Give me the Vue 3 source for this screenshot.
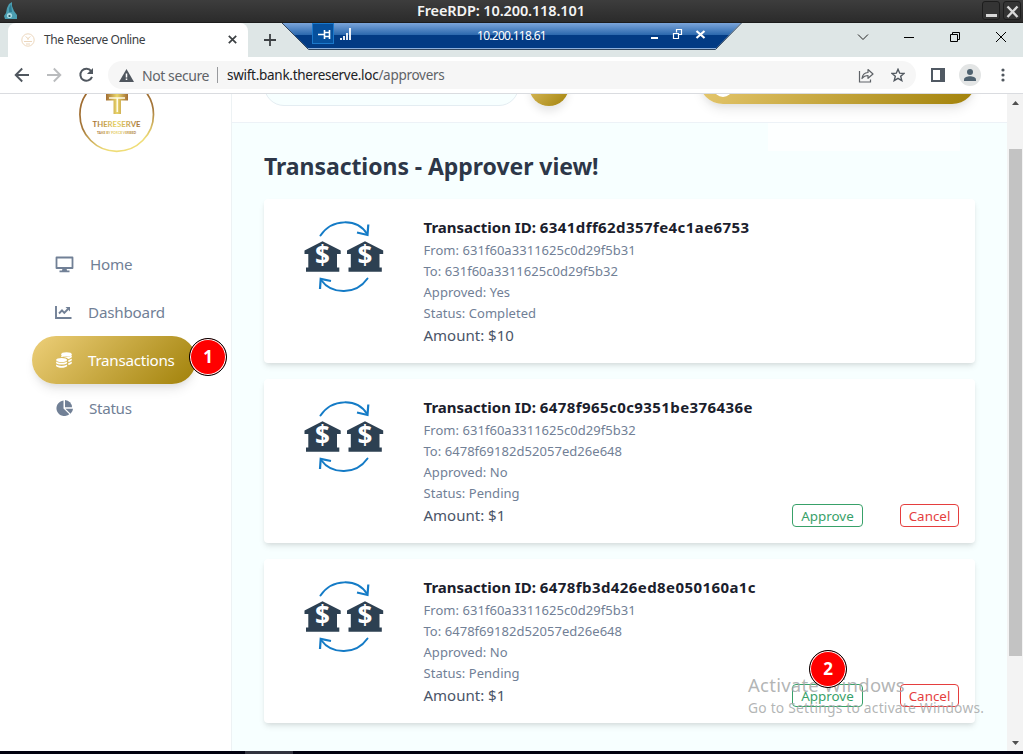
<script setup>
const transactions = [
  {
    id: '6341dff62d357fe4c1ae6753',
    from: '631f60a3311625c0d29f5b31',
    to: '631f60a3311625c0d29f5b32',
    approved: 'Yes',
    status: 'Completed',
    amount: '$10',
    pending: false,
  },
  {
    id: '6478f965c0c9351be376436e',
    from: '631f60a3311625c0d29f5b32',
    to: '6478f69182d52057ed26e648',
    approved: 'No',
    status: 'Pending',
    amount: '$1',
    pending: true,
  },
  {
    id: '6478fb3d426ed8e050160a1c',
    from: '631f60a3311625c0d29f5b31',
    to: '6478f69182d52057ed26e648',
    approved: 'No',
    status: 'Pending',
    amount: '$1',
    pending: true,
  },
]
</script>

<template>
  <div class="screen">
    <header class="titlebar">
      <svg class="app-icon" width="14" height="18" viewBox="0 0 14 18">
        <path d="M8 0 5 2 3 6 2 11 0 14 1 17H13V13L10 9 8 4Z" fill="#4b9db0" />
        <path d="M7 2 5 6 5 10 8 10Z" fill="#2c7b92" />
        <circle cx="5.500" cy="13.500" r="2.600" fill="#a9dbe3" />
        <circle cx="5.500" cy="14" r="1.100" fill="#214b58" />
      </svg>
      <span class="title">FreeRDP: 10.200.118.101</span>
      <div class="frame-buttons">
        <span class="frame-button"><svg width="17" height="18" viewBox="0 0 17 18"><rect x="3" y="12" width="11" height="3" fill="#d8d8d8" /></svg></span>
        <span class="frame-button"><svg width="17" height="18" viewBox="0 0 17 18"><path d="M3.500 4.500 13.500 15M13.500 4.500 3.500 15" stroke="#d8d8d8" stroke-width="2.400" /></svg></span>
      </div>
    </header>

    <div class="tabstrip">
      <div class="tab">
        <svg class="favicon" width="14" height="14" viewBox="0 0 14 14" fill="none" stroke="#ead3b5" stroke-width=".9">
          <circle cx="7" cy="7" r="6.200" />
          <path d="M4.500 3.500 7 5.500 9.500 3.500M7 5v2M3 8.500h8M5 11h4" />
        </svg>
        <span class="tab-title">The Reserve Online</span>
        <svg class="tab-close" width="9" height="9" viewBox="0 0 9 9"><path d="M.8.8 8.200 8.200M8.200.8.8 8.200" stroke="#3c4043" stroke-width="1.700" /></svg>
      </div>
      <svg class="new-tab" width="12" height="12" viewBox="0 0 12 12"><path d="M6 0v12M0 6h12" stroke="#3c4043" stroke-width="1.800" /></svg>
      <div class="window-controls">
        <svg width="12" height="12" viewBox="0 0 12 12" fill="none" stroke="#222"><path d="M1 3.500 6 8.500 11 3.500" /></svg>
        <svg width="12" height="12" viewBox="0 0 12 12" stroke="#000"><path d="M1 6.500h10" /></svg>
        <svg width="12" height="12" viewBox="0 0 12 12" fill="none" stroke="#000"><path d="M1.500 3.500h7v7h-7ZM3.500 3V1.500h7v7H9" /></svg>
        <svg width="12" height="12" viewBox="0 0 12 12" stroke="#000"><path d="M1 1 11 11M11 1 1 11" /></svg>
      </div>
    </div>

    <svg class="rdp-shape" width="464" height="28" viewBox="0 0 464 28">
      <defs>
        <linearGradient id="rdp" x1="0" y1="0" x2="0" y2="1">
          <stop offset="0" stop-color="#7ba5da" />
          <stop offset=".45" stop-color="#2c69ae" />
          <stop offset=".45" stop-color="#023b84" />
          <stop offset="1" stop-color="#023b84" />
        </linearGradient>
      </defs>
      <path d="M2 0H461L435.500 26H28.500Z" fill="url(#rdp)" />
      <path d="M27 25.500H437" stroke="#8cb0dd" />
      <path d="M2 0 28.500 26.500H435.500L461.500 0" fill="none" stroke="#33475f" />
      <rect x="32.500" y=".5" width="21" height="20" fill="#06509d" stroke="#1a78cb" />
      <path d="M38 11.500h6M44.500 7v9M44 9.500h5M44 13.500h5M49.500 7v9" fill="none" stroke="#fff" stroke-width="1.600" />
      <path d="M61 17v-2M64 17v-4M67 17v-7M70 17V5" stroke="#fff" stroke-width="1.800" />
      <path d="M371 15h7" stroke="#fff" stroke-width="2" />
      <path d="M393.500 10.500h5v5h-5ZM396.500 9.500V6.500h5v5H399" fill="none" stroke="#fff" stroke-width="1.200" />
      <path d="M416.500 8 424.500 15M424.500 8 416.500 15" stroke="#fff" stroke-width="2.200" />
    </svg>
    <span class="rdp-label">10.200.118.61</span>

    <div class="toolbar">
      <svg class="nav-icon" width="16" height="16" viewBox="0 0 16 16" fill="none" stroke="#50575f" stroke-width="1.900"><path d="M15 8H2M8.200 1.500 1.700 8 8.200 14.500" /></svg>
      <svg class="nav-icon" width="16" height="16" viewBox="0 0 16 16" fill="none" stroke="#babcbe" stroke-width="1.900"><path d="M1 8H14M7.800 1.500 14.300 8 7.800 14.500" /></svg>
      <svg class="nav-icon" width="16" height="16" viewBox="0 0 16 16"><path d="M13.200 4.100A6 6 0 1 0 14 9.800" fill="none" stroke="#50575f" stroke-width="2" /><path d="M15 .9V7H8.900Z" fill="#50575f" /></svg>
      <div class="address">
        <svg class="warn" width="15" height="13" viewBox="0 0 15 13"><path d="M7.500 0 15 13H0Z" fill="#50575f" /><path d="M7.500 4.500v4M7.500 9.500v1.600" stroke="#fff" stroke-width="1.500" /></svg>
        <span class="insecure">Not secure</span>
        <span class="divider"></span>
        <span class="url">swift.bank.thereserve.loc<em>/approvers</em></span>
        <svg class="share" width="16" height="15" viewBox="0 0 16 15" fill="none" stroke="#5f6368" stroke-width="1.200"><path d="M1.500 3v11h11v-2.500" /><path d="M4 10.500C4.500 6.500 7 4.700 10 4.500V1.500L15 6 10 10.300V7.500C7.500 7.500 5.500 8.500 4 10.500Z" stroke-linejoin="round" /></svg>
        <svg class="star" width="14" height="14" viewBox="0 0 14 14"><path d="M7 1.300 8.700 5.200 13 5.500 9.700 8.300 10.800 12.600 7 10.300 3.200 12.600 4.300 8.300 1 5.500 5.300 5.200Z" fill="none" stroke="#50575f" stroke-width="1.400" /></svg>
      </div>
      <svg class="panel" width="14" height="14" viewBox="0 0 14 14"><path d="M1 1h12v12H1Z" fill="#fff" stroke="#505963" stroke-width="2" /><path d="M9 1h4v12H9Z" fill="#505963" /></svg>
      <span class="profile"><svg width="12" height="12" viewBox="0 0 12 12" fill="#4f6270"><circle cx="6" cy="3" r="3" /><path d="M0 12V10.500C0 8.500 3.500 7.300 6 7.300S12 8.500 12 10.500V12Z" /></svg></span>
      <svg class="dots" width="4" height="14" viewBox="0 0 4 14" fill="#50575f"><circle cx="2" cy="2" r="1.600" /><circle cx="2" cy="7" r="1.600" /><circle cx="2" cy="12" r="1.600" /></svg>
    </div>

    <div class="viewport">
      <aside class="sidebar">
        <svg class="logo" width="76" height="60" viewBox="0 0 76 60">
          <defs>
            <linearGradient id="gold" x1="0" y1="0" x2="1" y2="0">
              <stop offset="0" stop-color="#a26d32" />
              <stop offset=".5" stop-color="#ead76a" />
              <stop offset="1" stop-color="#a26d32" />
            </linearGradient>
            <linearGradient id="ring" x1="0" y1="0" x2=".3" y2="1">
              <stop offset="0" stop-color="#9b6329" />
              <stop offset=".65" stop-color="#a5773a" />
              <stop offset="1" stop-color="#efdd78" />
            </linearGradient>
          </defs>
          <circle cx="37.700" cy="20.500" r="36.800" fill="none" stroke="url(#ring)" stroke-width="1.700" />
          <path d="M27 0H49V6.500H42V20H34.500V6.500H27Z" fill="url(#gold)" />
          <path d="M30 4h16M38.300 4v14" stroke="#fffbe8" stroke-width="1.600" />
          <text x="13.500" y="32.800" class="brand" textLength="48" lengthAdjust="spacingAndGlyphs" fill="url(#gold)">THERESERVE</text>
          <text x="18" y="40.200" class="motto" textLength="39" lengthAdjust="spacingAndGlyphs" fill="url(#gold)">TAKE BY FORCE VERBED</text>
        </svg>
        <nav class="menu">
          <a class="item home">
            <svg width="19" height="17" viewBox="0 0 19 17"><path d="M1.500 1.500H17.500V12H1.500Z" fill="none" stroke="#718096" stroke-width="1.800" stroke-linejoin="round" /><path d="M7.500 12.500h4L12 14.500h2.500v1.800h-10V14.500H7Z" fill="#718096" /></svg>
            <span>Home</span>
          </a>
          <a class="item dashboard">
            <svg width="17" height="13" viewBox="0 0 17 13" fill="none" stroke="#718096"><path d="M1 0v12h15.500" stroke-width="1.900" /><path d="M4 7.500 7 4.300 9.300 6.800 13 3" stroke-width="1.900" /><path d="M10.500 1H15V5.500Z" fill="#718096" stroke="none" /></svg>
            <span>Dashboard</span>
          </a>
          <a class="item active">
            <svg width="16" height="16" viewBox="0 0 16 16" fill="#fff"><ellipse cx="10.500" cy="2.400" rx="5.300" ry="2.200" /><path d="M5.200 3.600C7 5.500 14 5.500 15.800 3.600V5C15.500 6 13.500 6.900 12 6.900 11.200 5.600 8 5 5.200 5.100Z" /><path d="M12.300 8C14 7.800 15.300 7.200 15.800 6.600V8C15.500 9 14 9.700 12.300 9.900Z" /><path d="M12.300 11C14 10.800 15.300 10.200 15.800 9.600V11C15.500 12 14 12.700 12.300 12.900Z" /><ellipse cx="5.600" cy="8" rx="5.500" ry="2" /><path d="M.1 9.500C2 11.300 9.200 11.300 11.100 9.500V11C10 13.100 1.200 13.100.1 11Z" /><path d="M.1 12.600C2 14.400 9.200 14.400 11.100 12.600V14C10 16.400 1.200 16.400.1 14Z" /></svg>
            <span>Transactions</span>
          </a>
          <a class="item status">
            <svg width="17" height="17" viewBox="0 0 17 17" fill="#718096"><path d="M7.500.5V8.500L13.300 14.200A7.800 7.800 0 1 1 7.500.5Z" /><path d="M9 0A7.500 7.500 0 0 1 16 7.300H9Z" /><path d="M9.400 8.700H17A7.600 7.600 0 0 1 14.600 13.700Z" /></svg>
            <span>Status</span>
          </a>
        </nav>
      </aside>

      <main class="content">
        <div class="topbar">
          <div class="search"></div>
          <div class="search-button"></div>
          <div class="user-button"><i></i></div>
        </div>
        <div class="page">
          <h1><span>Transactions - Approver view!</span></h1>
          <article v-for="t in transactions" :key="t.id" class="card">
            <svg class="transfer" width="80" height="72" viewBox="0 0 80 72">
              <g fill="none" stroke="#147bc6" stroke-width="2">
                <path d="M16.500 14.500C28-2.500 53-3 63 13" stroke-linecap="round" />
                <path d="M53 11.500 63.500 14 64.300 3.500" stroke-width="2.200" />
                <path d="M63.500 57.500C52 74 28 74 17 59" stroke-linecap="round" />
                <path d="M27 60 16.700 57.800 16 68" stroke-width="2.200" />
              </g>
              <g v-for="x in [0, 42.500]" :key="x" :transform="`translate(${x} 0)`">
                <path d="M18.500 20.300 36.700 29.500V33H33V46.500H35.300V50.800H2V46.500H4.300V33H.5V29.500Z" fill="#2d4052" />
                <text x="18.500" y="44.200" class="dollar">$</text>
              </g>
            </svg>
            <div class="details">
              <h2><span>Transaction ID: </span><span class="txid">{{ t.id }}</span></h2>
              <p>From: {{ t.from }}</p>
              <p>To: {{ t.to }}</p>
              <p>Approved: {{ t.approved }}</p>
              <p>Status: {{ t.status }}</p>
              <div class="amount">Amount: {{ t.amount }}</div>
            </div>
            <div v-if="t.pending" class="actions">
              <button class="approve">Approve</button>
              <button class="cancel">Cancel</button>
            </div>
          </article>
        </div>
      </main>

      <div class="scrollbar">
        <svg width="15" height="17" viewBox="0 0 15 17"><path d="M5 11 8.500 7 12 11Z" fill="#505050" /></svg>
        <div class="thumb"></div>
        <svg class="down" width="15" height="17" viewBox="0 0 15 17"><path d="M5 7 8.500 11 12 7Z" fill="#505050" /></svg>
      </div>
    </div>
    <footer class="taskbar"><i></i></footer>

    <div class="watermark">
      <div class="wm-title">Activate Windows</div>
      <div class="wm-sub">Go to Settings to activate Windows.</div>
    </div>
    <span class="marker one">1</span>
    <span class="marker two">2</span>
  </div>
</template>

<style>
html, body { margin: 0; overflow: hidden; }
</style>

<style scoped>
* { box-sizing: border-box; }
.screen {
  position: relative; width: 1023px; height: 754px; overflow: hidden;
  display: flex; flex-direction: column; background: #fff;
  font-family: "Noto Sans", "Open Sans", sans-serif;
}
svg { display: block; flex: none; }
span, p, h1, h2 { white-space: nowrap; }

.titlebar {
  height: 23px; flex: none; display: flex; align-items: center;
  padding: 0 0 1px 4px; background: linear-gradient(#3d3d3d, #2b2b2b); border-bottom: 1px solid #1c1c1c;
}
.title { margin-left: 399px; color: #f4f4f4; font-size: 14.500px; font-weight: 600; line-height: 20px; letter-spacing: -.12px; position: relative; top: -1px; }
.frame-buttons { display: flex; gap: 3px; margin-left: auto; padding-right: 2px; }
.frame-button { width: 18px; height: 19px; border: 1px solid #1d1d1d; border-radius: 3px; background: #343434; display: flex; align-items: center; justify-content: center; }

.tabstrip { height: 34px; flex: none; display: flex; background: #dee6e6; }
.tab { width: 240px; margin-left: 8px; padding: 0 11px 1px 13px; display: flex; align-items: center; background: #fff; border-radius: 8px 8px 0 0; }
.tab-title { margin-left: 9px; flex: 1; font-size: 12px; color: #3c4043; letter-spacing: -.43px; }
.new-tab { margin: 11px 0 0 16px; }
.window-controls { margin-left: auto; padding: 8px 16px 0 0; display: flex; gap: 34px; }

.rdp-shape { position: absolute; left: 280px; top: 23px; }
.rdp-label { position: absolute; left: 477px; top: 27px; font-size: 12px; line-height: 18px; color: #fff; letter-spacing: -.72px; }

.toolbar { height: 37px; flex: none; display: flex; align-items: center; padding: 0 18px 0 14px; border-bottom: 1px solid #dadce0; background: #fff; }
.nav-icon { margin-right: 16px; }
.address { width: 808px; height: 28px; border-radius: 14px; background: #f6f6f6; display: flex; align-items: center; padding: 0 11px 0 11px; margin-left: -2px; }
.insecure { margin-left: 8px; font-size: 14px; color: #5f6368; letter-spacing: -.42px; width: 68px; }
.divider { width: 1px; height: 16px; background: #989a9d; margin: 0 9px 0 7px; }
.url { font-size: 13.500px; color: #202124; letter-spacing: -.28px; }
.url em { font-style: normal; color: #5f6368; }
.share { margin-left: auto; }
.star { margin-left: 17px; }
.panel { margin-left: 15px; }
.profile { width: 22px; height: 22px; margin-left: 14px; border-radius: 50%; background: #e3e5e5; display: flex; align-items: center; justify-content: center; }
.dots { margin-left: 20px; }

.viewport { height: 657px; flex: none; display: flex; }
.sidebar { width: 232px; flex: none; border-right: 1px solid #edf2f4; }
.logo { margin-left: 79px; }
.brand { font: 700 6.500px Lato, sans-serif; }
.motto { font: 700 2.800px Lato, sans-serif; }
.menu { margin: 86px 0 0 32px; width: 164px; }
.item { height: 48px; display: flex; align-items: center; padding-left: 24px; color: #718096; font-size: 15.200px; letter-spacing: -.2px; }
.item svg { margin-right: 15px; }
.item.home svg { margin: 0 15px 0 0; }
.item.active svg, .item.status svg { margin-right: 16px; }
.item.status { letter-spacing: -.3px; }
.item.active { letter-spacing: -.28px; color: #fff; border-radius: 24px; background: linear-gradient(135deg, #edcf79, #a18109); box-shadow: 0 8px 12px -3px #00000018, 0 4px 6px -2px #00000010; }
.item.home svg, .item.dashboard svg { position: relative; left: -1px; }

.content { flex: 1; background: #f7ffff; overflow: hidden; }
.topbar { height: 29px; padding-left: 32px; display: flex; background: #fff; border-bottom: 1px solid #edf2f7; }
.search { width: 255px; height: 40px; margin-top: -28px; border: 1px solid #e4edf2; border-radius: 20px; background: #f7ffff; }
.search-button { width: 40px; height: 40px; margin: -28px 0 0 10px; border-radius: 50%; background: linear-gradient(135deg, #edcf79, #a18109); box-shadow: 0 7px 10px -2px #0000001c; }
.user-button { width: 277px; height: 48px; margin: -38px 0 0 130px; padding: 24px 0 0 15px; border-radius: 24px; background: linear-gradient(135deg, #edcf79, #a18109); box-shadow: 0 8px 12px -3px #00000018, 0 4px 6px -2px #0000000c; }
.user-button i { display: block; width: 18px; height: 17px; border-radius: 50%; background: #fff; }
.page { position: relative; padding: 28px 32px 0 32px; }
.page::before { content: ""; position: absolute; left: 536px; top: 0; width: 192px; height: 28px; background: #fdffff; }
h1 { position: relative; top: -1px; margin: 0 0 16px; font-size: 23px; line-height: 32px; font-weight: 700; color: #2d3748; letter-spacing: -.06px; }
.card { height: 164px; margin-bottom: 16px; padding: 16px 16px 0 40px; display: flex; background: #fff; border-radius: 4px; box-shadow: 0 4px 6px -1px #0000001a, 0 2px 4px -1px #0000000f; }
.transfer { margin-top: 6px; }
.dollar { font: 700 26px "Noto Sans", sans-serif; fill: #fff; text-anchor: middle; }
.details { margin-left: 39.500px; }
h2 { margin: 0; font-size: 15px; line-height: 24px; font-weight: 700; color: #1a202c; white-space: pre; }
h2 span { white-space: pre; }
.txid { letter-spacing: .42px; }
p { margin: 0; font-size: 13px; line-height: 21px; color: #718096; letter-spacing: .04px; position: relative; top: 1px; }
.amount { font-size: 15px; line-height: 24px; color: #4a5568; }
.actions { margin-left: auto; align-self: flex-end; display: flex; gap: 37px; padding-bottom: 16px; }
button { height: 23px; padding: 0; border: 1px solid; border-radius: 4px; background: transparent; font: 13.400px/20px "Noto Sans", sans-serif; }
.approve { width: 71px; color: #38a169; border-color: #38a169; }
.cancel { width: 59px; color: #e53e3e; border-color: #e53e3e; }

.scrollbar { width: 16px; flex: none; display: flex; flex-direction: column; background: #f3f3f3; padding-right: 1px; }
.thumb { height: 507px; margin: 38px 0 0 2px; background: #c3c3c3; }
.down { margin-top: auto; }
.taskbar { flex: 1; background: #01010f; }
.taskbar i { display: block; width: 48px; height: 3px; margin-left: 245px; background: #32323d; }

.watermark { position: absolute; left: 748px; top: 672px; color: #a5a8a8d9; }
.wm-title { font-size: 18.500px; line-height: 26px; letter-spacing: .25px; }
.wm-sub { font-size: 13.800px; line-height: 19px; letter-spacing: .22px; white-space: nowrap; }
.marker { position: absolute; width: 38px; height: 38px; border: 1.500px solid #000; border-radius: 50%; background: #f00; box-shadow: inset 0 0 0 1px #fff; color: #fff; font: 700 17px/36px "Noto Sans", sans-serif; text-align: center; }
.one { left: 189px; top: 338px; }
.two { left: 809px; top: 650px; }
</style>
